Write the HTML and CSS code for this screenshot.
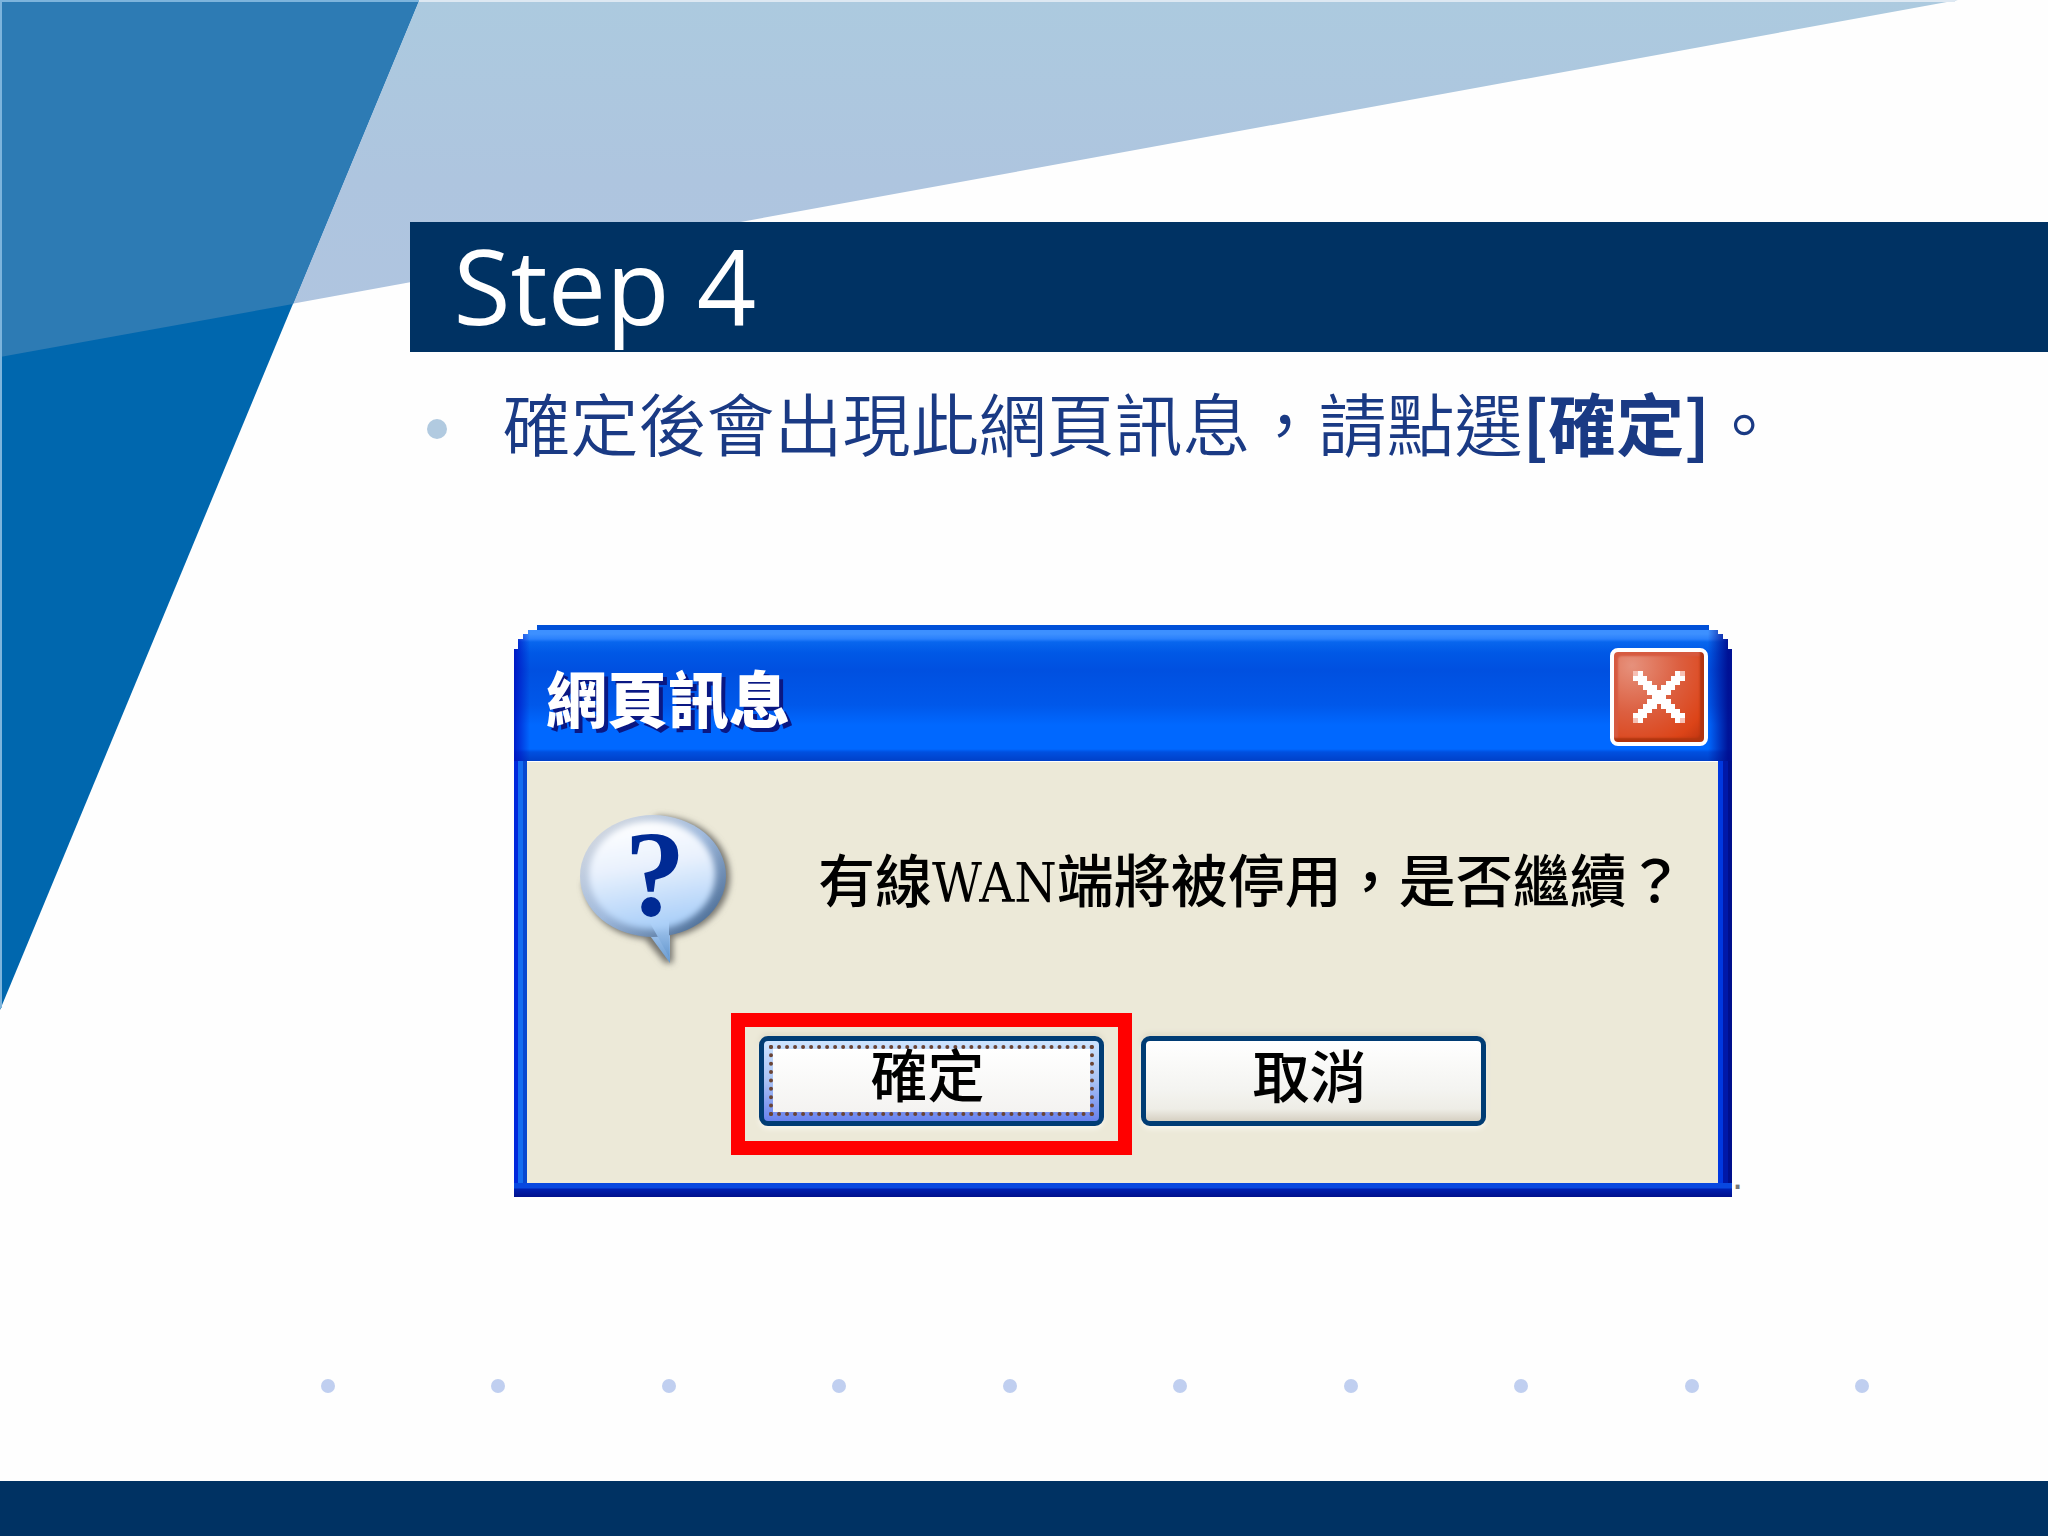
FILE: index.html
```html
<!doctype html>
<html lang="zh-Hant">
<head>
<meta charset="UTF-8">
<title>Step 4</title>
<link rel="stylesheet" href="styles.css">
</head>
<body>
	<div class="slide">
		<svg class="bg" viewBox="0 0 2048 1536" preserveAspectRatio="none" aria-hidden="true">
			<defs>
				<linearGradient id="light" x1="0" y1="0" x2="0" y2="1">
					<stop offset="0" stop-color="#accadf"/>
					<stop offset="0.5" stop-color="#aec5df"/>
					<stop offset="1" stop-color="#b0c5e0"/>
				</linearGradient>
			</defs>
			<polygon points="0,0 1958,0 0,357" fill="url(#light)"/>
			<polygon points="0,0 419,0 0,1010" fill="#0067ae"/>
			<polygon points="0,0 419,0 293,304 0,357" fill="#2d7bb4"/>
			<path d="M1 0V1008" stroke="#7db4dc" stroke-width="2"/>
			<path d="M0 1H419" stroke="#7db4dc" stroke-width="2"/>
			<path d="M419 1H1955" stroke="#dde8f2" stroke-width="2"/>
		</svg>
		<h1 class="title">Step 4</h1>
		<ul class="content">
			<li>確定後會出現此網頁訊息，請點選<b>[確定]</b>。</li>
		</ul>
		<div class="figure">
			<div class="dialog">
				<div class="dialog-title">
					<h2>網頁訊息</h2>
					<button class="close" type="button" aria-label="關閉">
						<svg viewBox="0 0 21 21" shape-rendering="crispEdges">
							<path d="M5 5h2v1h-2zM14 5h2v1h-2zM5 6h3v1h-3zM13 6h3v1h-3zM6 7h3v1h-3zM12 7h3v1h-3zM7 8h3v1h-3zM11 8h3v1h-3zM8 9h5v1h-5zM9 10h3v1h-3zM8 11h5v1h-5zM7 12h3v1h-3zM11 12h3v1h-3zM6 13h3v1h-3zM12 13h3v1h-3zM5 14h3v1h-3zM13 14h3v1h-3zM5 15h2v1h-2zM14 15h2v1h-2z" fill="#fff"/>
							<path d="M5 5h1v1h-1zM15 5h1v1h-1zM5 15h1v1h-1zM15 15h1v1h-1z" fill="#f6c0b4"/>
						</svg>
					</button>
				</div>
				<div class="dialog-body">
					<div class="message">
						<svg class="icon" viewBox="0 0 152 152" aria-hidden="true">
							<defs>
								<linearGradient id="rim" x1="0" y1="0" x2="1" y2="1">
									<stop offset="0.1" stop-color="#d3d8e0"/>
									<stop offset="0.5" stop-color="#9fb9dc"/>
									<stop offset="0.9" stop-color="#4b6d96"/>
								</linearGradient>
								<linearGradient id="tail" x1="0" y1="0" x2="0" y2="1">
									<stop offset="0" stop-color="#a9cbf2"/>
									<stop offset="1" stop-color="#6799cf"/>
								</linearGradient>
								<linearGradient id="fill" x1="0.4" y1="0" x2="0.6" y2="1">
									<stop offset="0" stop-color="#ffffff"/>
									<stop offset="0.4" stop-color="#e9f1fd"/>
									<stop offset="1" stop-color="#a6cdf8"/>
								</linearGradient>
								<filter id="soft" x="-10%" y="-10%" width="120%" height="120%">
									<feGaussianBlur stdDeviation="3"/>
								</filter>
							</defs>
							<path d="M78 3C120 3 151 30 151 64C151 94 126 118 94 124V150H86L66 126C28 122 6 96 4 70Z" fill="#77766f" filter="url(#soft)"/>
							<path d="M66 116L91 150V114Z" fill="url(#tail)"/>
							<ellipse cx="74" cy="63" rx="73" ry="61" fill="url(#rim)"/>
							<path d="M70 108L90 144V108Z" fill="url(#tail)"/>
							<ellipse cx="73" cy="62" rx="63" ry="54" fill="url(#fill)" filter="url(#soft)"/>
							<text class="mark" x="76" y="102" text-anchor="middle">?</text>
						</svg>
						<p>有線<span class="latin">WAN</span>端將被停用，是否繼續？</p>
					</div>
					<div class="buttons">
						<div class="highlight">
							<button class="btn btn-default" type="button"><span>確定</span></button>
						</div>
						<button class="btn" type="button"><span>取消</span></button>
					</div>
				</div>
			</div>
			<span class="dot-end">.</span>
		</div>
		<div class="dots">
			<i></i><i></i><i></i><i></i><i></i><i></i><i></i><i></i><i></i><i></i>
		</div>
		<div class="footer"></div>
	</div>
</body>
</html>
```

FILE: styles.css
```css
* {margin:0;padding:0;box-sizing:border-box;}
body{background:#fefefe;font-family:"Noto Sans CJK TC",sans-serif;}
ul{list-style:none;}
button{border:0;font-family:inherit;}

.slide{position:relative;display:flex;flex-direction:column;min-height:100vh;padding-top:222px;}
.bg{position:absolute;top:0;left:0;width:100%;height:100%;z-index:-1;}

.title{margin-left:20%;height:130px;padding-left:44px;background:#003263;color:#fff;font:400 104px/126px "Open Sans","Noto Sans",sans-serif;}

.content{margin-left:20%;padding:20px 0 0 17px;}
.content li{display:flex;align-items:center;color:#1a3a84;font-size:68px;line-height:100px;font-weight:350;white-space:nowrap;}
.content li::before{content:"";width:20px;height:20px;margin:14px 56px 0 0;border-radius:50%;background:#b1cae0;}
.content b{font-weight:700;}

.figure{display:flex;align-items:flex-end;margin:153px 0 0 25%;padding-left:2px;}
.dialog{
	width:79.4%;
	background:
		linear-gradient(to right,#0028dc 4px,#146cf0 4px,#146cf0 9px,#0848d0 9px,#0848d0 13px,transparent 13px) 0 136px no-repeat,
		linear-gradient(to left,#000f8c 4px,#0018a8 4px,#0018a8 9px,#0038e0 9px,#0038e0 14px,transparent 14px) 0 136px no-repeat,
		#0038e0;
	clip-path:polygon(0 24px,4px 24px,4px 14px,9px 14px,9px 9px,14px 9px,14px 5px,23px 5px,23px 0,calc(100% - 23px) 0,calc(100% - 23px) 5px,calc(100% - 14px) 5px,calc(100% - 14px) 9px,calc(100% - 9px) 9px,calc(100% - 9px) 14px,calc(100% - 4px) 14px,calc(100% - 4px) 24px,100% 24px,100% 100%,0 100%);
}
.dialog-title{
	display:flex;align-items:center;justify-content:space-between;height:136px;padding:8px 24px 0 32px;
	background:
		linear-gradient(to right,rgba(0,10,190,.8),transparent 16px,transparent calc(100% - 24px),rgba(0,10,140,.9) calc(100% - 4px)),
		linear-gradient(#0050d8 0,#0050d8 5px,#3d90ff 5px,#3d90ff 9px,#2a80fc 14px,#0866ee 17px,#0058e6 28px,#0050e0 45px,#0058ea 80px,#0068ff 100px,#0068ff 124px,#0050e0 127px,#0040c8 136px);
}
.dialog-title h2{color:#fff;font-size:61px;line-height:80px;font-weight:900;text-shadow:4px 4px 0 #0a1883;}
.close{
	width:98px;height:98px;border:4px solid #fff;border-radius:8px;
	background:radial-gradient(circle at 20% 15%,#e6917c,#dc5f40 45%,#dc4418 80%,#b83210);
	box-shadow:inset -4px -4px 2px #b03510,inset 4px 4px 2px #d65a40;
}
.close svg{display:block;width:98px;height:98px;margin:-4px;}

.dialog-body{margin:0 14px 0 13px;padding:51px 52px 28px;border-top:1px solid #fff;background:#ece9d8;}
.dialog::after{content:"";display:block;height:14px;background:linear-gradient(#0848e0 5px,#0020b0 6px,#00108c);}
.message{display:flex;align-items:center;}
.message p{margin:0 0 24px 87px;color:#000;font-size:57px;line-height:80px;font-weight:500;white-space:nowrap;}
.latin{font:400 54px/60px "DejaVu Serif Condensed","Liberation Serif",serif;}
.icon{display:block;width:152px;height:152px;overflow:visible;}
.mark{font:700 122px "Liberation Serif",serif;fill:#002a94;}

.buttons{display:flex;justify-content:center;align-items:center;gap:9px;margin-top:48px;padding-right:28px;}
.highlight{border:14px solid #f00;padding:9px 14px 15px;}
.btn{
	display:block;width:345px;height:90px;padding:0;border:5px solid #003c74;border-radius:9px;color:#000;
	font-size:57px;line-height:62px;font-weight:500;
	background:linear-gradient(#fff,#f4f4f1 60%,#eeede6 85%,#d6d0c2);
	box-shadow:0 3px 5px #f8f6ee,0 -3px 5px #dfdac8;
}
.btn span{display:block;padding:0 8px 16px 0;}
.buttons > .btn{margin-bottom:6px;}
.btn-default{padding:4px 5px 5px;background:linear-gradient(#cde4ff,#a9c2f4 50%,#6982ee);}
.btn-default span{height:71px;border:4px dotted #6b4435;padding:0 8px 0 0;line-height:46px;background:linear-gradient(#fff,#f4f3f1) padding-box;}

.dot-end{color:#777;font:40px/44px "Liberation Sans",sans-serif;}

.dots{display:flex;justify-content:space-between;margin-top:auto;padding:0 179px 88px 321px;}
.dots i{width:14px;height:14px;border-radius:50%;background:#c0cff0;}
.footer{height:55px;background:#003263;}
```
